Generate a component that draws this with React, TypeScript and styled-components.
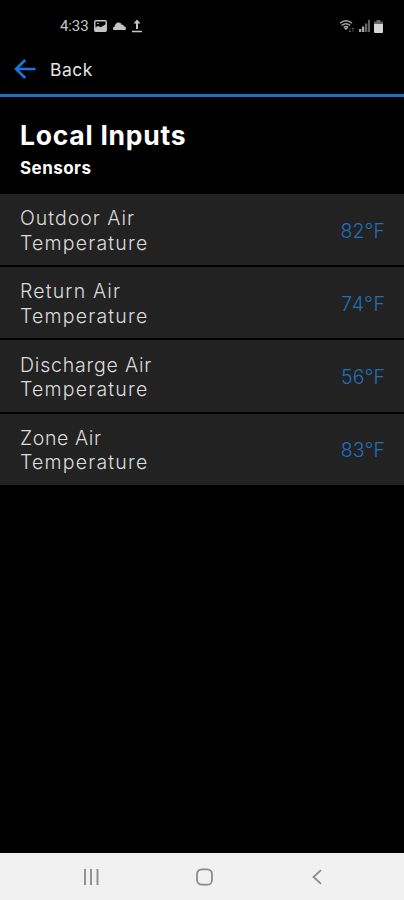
import React from 'react';
import styled, { createGlobalStyle } from 'styled-components';

const GlobalStyle = createGlobalStyle`
  * { box-sizing: border-box; }
  body { margin: 0; background: #000; font-family: Inter, "Open Sans", sans-serif; }
`;

const Screen = styled.div`
  width: 100%;
  max-width: 404px;
  height: 900px;
  display: flex;
  flex-direction: column;
  background: #000;
  overflow: hidden;
`;

const StatusBar = styled.div`
  height: 50px;
  padding: 2px 21px 0 60px;
  display: flex;
  align-items: center;
  justify-content: space-between;
  color: #c4c4c4;
`;

const StatusGroup = styled.div<{ $gap: number }>`
  display: flex;
  align-items: center;
  gap: ${(p) => p.$gap}px;
  svg { display: block; }
`;

const Clock = styled.span`
  width: 28px;
  font: 400 15px/18px Roboto, sans-serif;
  letter-spacing: -0.1px;
`;

const Header = styled.header`
  height: 47px;
  padding: 0 14px 5px;
  display: flex;
  align-items: center;
  border-bottom: 3px solid #1a70c0;
`;

const BackButton = styled.button`
  display: flex;
  align-items: center;
  gap: 14px;
  padding: 0;
  border: 0;
  background: none;
  color: #e4e4e4;
  font: 400 17.5px/22px Inter, sans-serif;
  letter-spacing: 0.5px;
  svg { display: block; margin-bottom: 2px; }
`;

const BackLabel = styled.span`
  padding-top: 1px;
`;

const Heading = styled.div`
  height: 97px;
  padding: 21px 20px 0;
  color: #fff;
`;

const Title = styled.h1`
  margin: 0;
  font-size: 26.5px;
  line-height: 34px;
  font-weight: 700;
  letter-spacing: 0.75px;
`;

const Subtitle = styled.h2`
  margin: 5px 0 0;
  font-size: 17px;
  line-height: 22px;
  font-weight: 700;
  letter-spacing: 0.45px;
`;

const List = styled.ul`
  margin: 0;
  padding: 0;
  list-style: none;
  display: flex;
  flex-direction: column;
  gap: 2px;
`;

const Row = styled.li`
  height: 71.2px;
  padding: 2px 19px 0 20px;
  display: flex;
  align-items: center;
  justify-content: space-between;
  background: #222;
`;

const Label = styled.div`
  font-size: 19.5px;
  line-height: 24.4px;
  font-weight: 300;
  color: #dcdcdc;
`;

const Line = styled.span<{ $track: number }>`
  display: block;
  letter-spacing: ${(p) => p.$track}px;
`;

const Value = styled.span<{ $track: number }>`
  font-size: 19.5px;
  font-weight: 300;
  color: #206fb9;
  letter-spacing: ${(p) => p.$track}px;
  margin-right: ${(p) => -p.$track}px;
`;

const NavBar = styled.nav`
  height: 47px;
  margin-top: auto;
  padding: 0 79px 0 80px;
  display: flex;
  align-items: center;
  justify-content: space-between;
  background: #f1f1f1;
  svg { display: block; }
`;

const sensors = [
  { name: 'Outdoor Air', value: '82°F', track: 1, valueTrack: 0.1 },
  { name: 'Return Air', value: '74°F', track: 1.15, valueTrack: 0.6 },
  { name: 'Discharge Air', value: '56°F', track: 0.8, valueTrack: 0.1 },
  { name: 'Zone Air', value: '83°F', track: 0.6, valueTrack: 0.1 },
];

const PhotoIcon = () => (
  <svg width="13" height="12" viewBox="0 0 13 12" fill="none" stroke="currentColor" strokeWidth="1.4">
    <rect x="0.8" y="0.8" width="11.4" height="10.4" rx="1" />
    <path d="M1 8l3-1.600 3 1.200 5-3V11H1zM3 3.5h2" fill="currentColor" strokeWidth="0.8" />
  </svg>
);

const CloudIcon = () => (
  <svg width="13" height="8" viewBox="0 0 13 8" fill="currentColor">
    <path d="M1.500 8C.5 8 0 7.300 0 6.400 0 5.300.8 4.500 1.800 4.400 2 2 3.600.4 5.600.4c1.700 0 2.800 1 3.200 2.500 1.400-.2 2.300.6 2.400 1.700C12.400 4.700 13 5.400 13 6.400 13 7.400 12.300 8 11.300 8z" />
  </svg>
);

const UploadIcon = () => (
  <svg width="10" height="14" viewBox="0 0 10 14" fill="currentColor">
    <path d="M5 .5L8.500 4.500H6V10H4V4.500H1.500zM0 11.800h10v1.400H0z" />
  </svg>
);

const WifiIcon = () => (
  <svg width="16" height="15" viewBox="0 0 16 15" fill="none" stroke="currentColor">
    <path d="M1 4.300Q7-.8 13 4.300M2.800 6.300q4.200-3.200 8.400 0M4.700 8.300q2.300-1.800 4.600 0" strokeWidth="1.500" opacity="0.850" />
    <path d="M5.500 9h3L7 10.800z" fill="currentColor" strokeWidth="0.500" />
    <path d="M11 9v4M10 12l1 1 1-1M14 13V9M13 10l1-1 1 1" strokeWidth="0.700" opacity="0.500" />
  </svg>
);

const SignalIcon = () => (
  <svg width="11" height="12" viewBox="0 0 11 12" fill="currentColor">
    <path d="M0 9h2.300v3H0zM3 6.500h2.300V12H3z" opacity="0.850" />
    <path d="M6 3.500h2.300V12H6zM9 0h2v12H9z" opacity="0.500" />
  </svg>
);

const BatteryIcon = () => (
  <svg width="9" height="13" viewBox="0 0 9 13">
    <path d="M2.500 0h4v1.500H8q1 0 1 1V5H0V2.500q0-1 1-1h1.500z" fill="#666" />
    <path d="M0 4h9v8q0 1-1 1H1q-1 0-1-1z" fill="#d5d5d5" />
  </svg>
);

const ArrowIcon = () => (
  <svg width="22" height="20" viewBox="0 0 22 20" fill="none" stroke="#1678d8" strokeWidth="2.700">
    <path d="M11.200 1L2 10l9.200 9M2 10h19.500" />
  </svg>
);

export default function App() {
  return (
    <>
      <GlobalStyle />
      <Screen>
        <StatusBar>
          <StatusGroup $gap={6}>
            <Clock>4:33</Clock>
            <PhotoIcon />
            <CloudIcon />
            <UploadIcon />
          </StatusGroup>
          <StatusGroup $gap={4}>
            <WifiIcon />
            <SignalIcon />
            <BatteryIcon />
          </StatusGroup>
        </StatusBar>
        <Header>
          <BackButton><ArrowIcon /><BackLabel>Back</BackLabel></BackButton>
        </Header>
        <Heading>
          <Title>Local Inputs</Title>
          <Subtitle>Sensors</Subtitle>
        </Heading>
        <List>
          {sensors.map((s) => (
            <Row key={s.name}>
              <Label>
                <Line $track={s.track}>{s.name}</Line>
                <Line $track={1.2}>Temperature</Line>
              </Label>
              <Value $track={s.valueTrack}>{s.value}</Value>
            </Row>
          ))}
        </List>
        <NavBar>
          <svg width="22" height="16" viewBox="0 0 22 16" stroke="#929292" strokeWidth="2">
            <path d="M5 0v16M11 0v16M17.500 0v16" />
          </svg>
          <svg width="20" height="18" viewBox="0 0 20 18" fill="none" stroke="#8c8c8c" strokeWidth="1.800">
            <rect x="1" y="1.300" width="15" height="15.400" rx="4.800" />
          </svg>
          <svg width="16" height="16" viewBox="0 0 16 16" fill="none" stroke="#8c8c8c" strokeWidth="1.800">
            <path d="M12 1.200L4.500 8l7.500 6.800" />
          </svg>
        </NavBar>
      </Screen>
    </>
  );
}
